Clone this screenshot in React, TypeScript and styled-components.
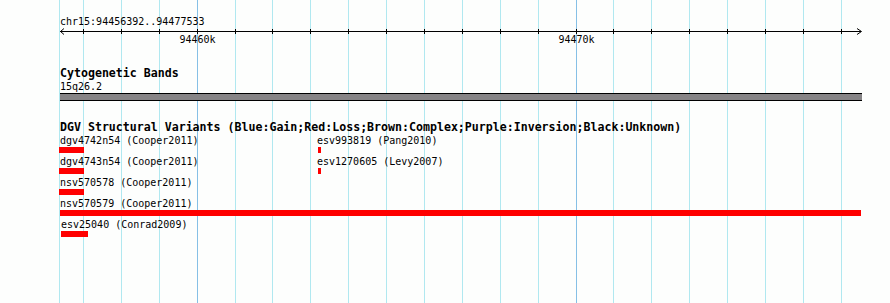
import styled, { createGlobalStyle } from "styled-components";

const START = 94456392;
const END = 94477533;
const LEFT = 60;
const WIDTH = 801;

const toX = (bp: number) => LEFT + ((bp - START) * WIDTH) / (END - START);

const GlobalStyle = createGlobalStyle`
  html, body {
    margin: 0;
    padding: 0;
    background: #fdfefd;
  }
`;

const Canvas = styled.div`
  position: relative;
  width: 890px;
  height: 303px;
  overflow: hidden;
  background: #fdfefd;
  font-family: "DejaVu Sans Mono", "Liberation Mono", monospace;
  color: #000;
`;

const GridLayer = styled.div`
  position: absolute;
  inset: 0;
  pointer-events: none;
`;

const GridLine = styled.div<{ $major?: boolean }>`
  position: absolute;
  top: 0;
  bottom: 0;
  width: 1px;
  background: ${(p) => (p.$major ? "#86c0e6" : "#b0e8f0")};
`;

const Tracks = styled.div`
  position: relative;
  display: flex;
  flex-direction: column;
  padding-top: 15px;
`;

const SmallText = styled.div`
  font-size: 10px;
  line-height: 13px;
  white-space: pre;
  padding-left: ${LEFT}px;
`;

const TrackTitle = styled.div<{ $gap: number }>`
  font-size: 11.6px;
  font-weight: bold;
  line-height: 14px;
  white-space: pre;
  padding-left: ${LEFT}px;
  margin-top: ${(p) => p.$gap}px;
`;

const Ruler = styled.div`
  position: relative;
  height: 18px;
`;

const RulerSvg = styled.svg`
  position: absolute;
  left: 0;
  top: 0;
`;

const TickLabel = styled.span`
  position: absolute;
  top: 5px;
  font-size: 10px;
  line-height: 13px;
  transform: translateX(-50%);
`;

const Band = styled.div`
  margin-left: ${LEFT}px;
  width: ${WIDTH + 1}px;
  height: 6px;
  background: #868486;
  border-top: 1px solid #000;
  border-bottom: 1px solid #000;
`;

const FeatureRow = styled.div`
  position: relative;
  height: 21px;
`;

const Feature = styled.div`
  position: absolute;
  top: 0;
  display: flex;
  flex-direction: column;
`;

const FeatureLabel = styled.span`
  font-size: 10px;
  line-height: 13px;
  white-space: pre;
`;

const Bar = styled.div<{ $offset: number }>`
  height: 6px;
  margin-left: ${(p) => p.$offset}px;
  background: #ff0000;
`;

type Feat = { label: string; left: number; barLeft: number; barWidth: number };

const rows: Feat[][] = [
  [
    { label: "dgv4742n54 (Cooper2011)", left: 60, barLeft: 59, barWidth: 25 },
    { label: "esv993819 (Pang2010)", left: 317, barLeft: 318, barWidth: 3 },
  ],
  [
    { label: "dgv4743n54 (Cooper2011)", left: 60, barLeft: 59, barWidth: 25 },
    { label: "esv1270605 (Levy2007)", left: 317, barLeft: 318, barWidth: 3 },
  ],
  [{ label: "nsv570578 (Cooper2011)", left: 60, barLeft: 59, barWidth: 25 }],
  [{ label: "nsv570579 (Cooper2011)", left: 60, barLeft: 60, barWidth: 801 }],
  [{ label: "esv25040 (Conrad2009)", left: 61, barLeft: 61, barWidth: 27 }],
];

const ticks: number[] = [];
for (let bp = 94457000; bp < END; bp += 1000) ticks.push(bp);

export default function App() {
  return (
    <>
      <GlobalStyle />
      <Canvas>
        <GridLayer>
          <GridLine style={{ left: 59 }} />
          {ticks.map((bp) => (
            <GridLine
              key={bp}
              $major={bp % 10000 === 0}
              style={{ left: Math.round(toX(bp)) }}
            />
          ))}
        </GridLayer>
        <Tracks>
          <SmallText>chr15:94456392..94477533</SmallText>
          <Ruler>
            <RulerSvg width={890} height={18}>
              <line x1={LEFT} y1={3.5} x2={LEFT + WIDTH} y2={3.5} stroke="#000" />
              <polyline points="64,0.5 60.5,3.5 64,6.5" fill="none" stroke="#000" />
              <polyline points="857,0.5 861.5,3.5 857,6.5" fill="none" stroke="#000" />
              {ticks.map((bp) => {
                const x = Math.round(toX(bp)) + 0.5;
                return <line key={bp} x1={x} y1={1} x2={x} y2={6} stroke="#000" />;
              })}
            </RulerSvg>
            {ticks
              .filter((bp) => bp % 10000 === 0)
              .map((bp) => (
                <TickLabel key={bp} style={{ left: Math.round(toX(bp)) + 0.5 }}>
                  {bp / 1000}k
                </TickLabel>
              ))}
          </Ruler>
          <TrackTitle $gap={20}>Cytogenetic Bands</TrackTitle>
          <SmallText>15q26.2</SmallText>
          <Band />
          <TrackTitle $gap={19}>
            DGV Structural Variants (Blue:Gain;Red:Loss;Brown:Complex;Purple:Inversion;Black:Unknown)
          </TrackTitle>
          {rows.map((row, i) => (
            <FeatureRow key={i}>
              {row.map((f) => (
                <Feature key={f.label} style={{ left: f.left }}>
                  <FeatureLabel>{f.label}</FeatureLabel>
                  <Bar $offset={f.barLeft - f.left} style={{ width: f.barWidth }} />
                </Feature>
              ))}
            </FeatureRow>
          ))}
        </Tracks>
      </Canvas>
    </>
  );
}
